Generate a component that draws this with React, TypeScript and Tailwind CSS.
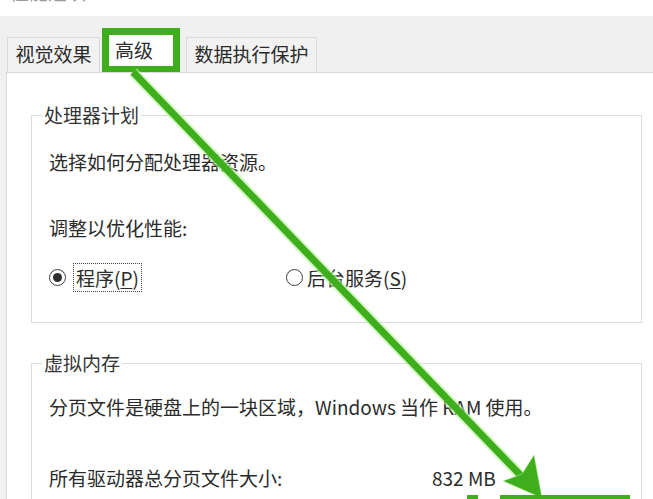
import React from 'react';

const Radio: React.FC<{ checked?: boolean }> = ({ checked }) => (
  <span className="w-[17px] h-[17px] rounded-full border-[1.5px] border-[#3a3a3a] bg-white flex items-center justify-center shrink-0">
    {checked && <span className="w-[9px] h-[9px] rounded-full bg-[#2e2e2e]" />}
  </span>
);

export default function App() {
  return (
    <div className="relative w-[653px] h-[499px] overflow-hidden bg-[#f0f0f0] text-[#2b2b2b] font-['Noto_Sans_CJK_SC','Noto_Sans',sans-serif] text-[19px]">
      {/* window title, cut off at the top */}
      <div className="h-[16px] bg-white overflow-hidden">
        <div className="-mt-[20px] pl-[10px] leading-[24px] text-[#9a9a9a] blur-[0.5px]">性能选项</div>
      </div>

      {/* tab strip */}
      <div className="h-[56px] flex items-end pl-[7px]">
        <div className="w-[93px] h-[35px] border border-b-0 border-[#d9d9d9] bg-[#f2f2f2] flex items-center justify-center leading-none pb-[3px]">
          视觉效果
        </div>
        <div className="ml-[2px] w-[78px] h-[44px] border-[7px] border-b-[6px] border-[#3fae1c] bg-white flex items-start pl-[6px] pt-[3px] leading-[24px]">
          高级
        </div>
        <div className="ml-[6px] w-[131px] h-[35px] border border-b-0 border-[#d9d9d9] bg-[#f2f2f2] flex items-center justify-center leading-none pb-[3px]">
          数据执行保护
        </div>
      </div>

      {/* tab page */}
      <div className="ml-[6px] h-[427px] bg-white border-l border-t border-[#dadada] pl-[24px] pr-[11px] pt-[32px]">
        <fieldset className="border border-[#dcdcdc] pb-[30px]">
          <legend className="ml-[10px] px-[2px] leading-[20px] text-[#333]">处理器计划</legend>
          <div className="pl-[17px]">
            <div className="mt-[24px] leading-[26px]">选择如何分配处理器资源。</div>
            <div className="mt-[40px] leading-[26px]">调整以优化性能:</div>
            <div className="mt-[22px] flex items-center h-[29px]">
              <div className="w-[237px] flex items-center">
                <Radio checked />
                <span className="ml-[7px] border border-dotted border-[#444] px-[2px] h-[29px] flex items-center leading-none">
                  程序(<span className="underline underline-offset-2">P</span>)
                </span>
              </div>
              <div className="flex items-center">
                <Radio />
                <span className="ml-[4px] leading-none">
                  后台服务(<span className="underline underline-offset-2">S</span>)
                </span>
              </div>
            </div>
          </div>
        </fieldset>

        <fieldset className="mt-[30px] border border-[#dcdcdc] pb-[30px]">
          <legend className="ml-[10px] px-[2px] leading-[20px] text-[#333]">虚拟内存</legend>
          <div className="pl-[17px]">
            <div className="mt-[21px] leading-[26px]">分页文件是硬盘上的一块区域，Windows 当作 RAM 使用。</div>
            <div className="mt-[45px] flex leading-[26px]">
              <span className="w-[383px]">所有驱动器总分页文件大小:</span>
              <span>832 MB</span>
            </div>
          </div>
        </fieldset>
      </div>

      {/* annotation arrow */}
      <svg className="absolute inset-0 pointer-events-none" width="653" height="499" viewBox="0 0 653 499">
        <line x1="133" y1="72" x2="526" y2="481" stroke="#b6f39c" strokeOpacity="0.6" strokeWidth="11" />
        <line x1="133" y1="72" x2="526" y2="481" stroke="#3fae1c" strokeWidth="7" />
        <polygon points="542,498 534,455 522,474 503,481" fill="#3fae1c" stroke="#b6f39c" strokeOpacity="0.5" strokeWidth="1" />
        <rect x="467" y="495" width="11" height="5" fill="#3fae1c" />
        <rect x="500" y="495" width="130" height="5" fill="#3fae1c" />
      </svg>
    </div>
  );
}
